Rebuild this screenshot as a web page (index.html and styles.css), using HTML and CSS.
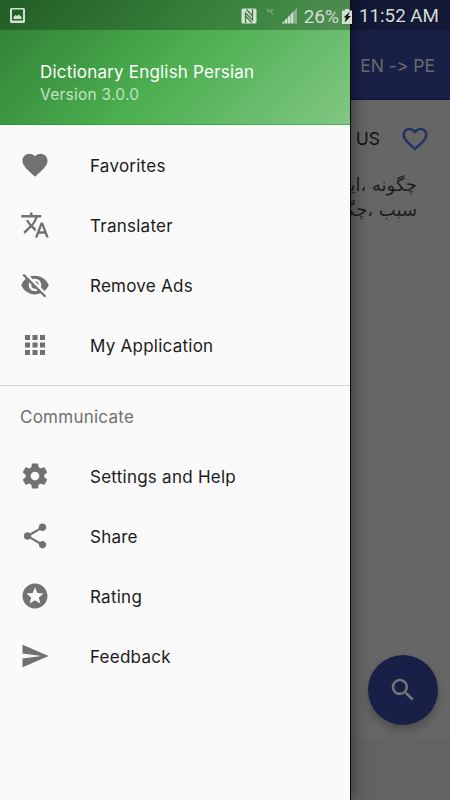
FILE: index.html
```html
<!DOCTYPE html>
<html lang="en">
<head>
  <meta charset="utf-8">
  <title>Dictionary English Persian</title>
  <link rel="stylesheet" href="styles.css">
</head>
<body>
<div class="screen">
  <div class="page">
    <div class="toolbar">EN -&gt; PE</div>
    <div class="word">
      <span class="word-accent">US</span>
      <svg class="icon word-heart" viewBox="0 0 24 24"><path d="M16.5 3c-1.74 0-3.41.81-4.5 2.09C10.91 3.81 9.24 3 7.5 3 4.42 3 2 5.42 2 8.5c0 3.78 3.4 6.86 8.55 11.54L12 21.35l1.45-1.32C18.6 15.36 22 12.28 22 8.5 22 5.42 19.58 3 16.5 3zm-4.4 15.55l-.1.1-.1-.1C7.14 14.24 4 11.39 4 8.5 4 6.5 5.5 5 7.5 5c1.54 0 3.04.99 3.57 2.36h1.87C13.46 5.99 14.96 5 16.5 5c2 0 3.5 1.5 3.5 3.5 0 2.89-3.14 5.74-7.9 10.05z"/></svg>
    </div>
    <div class="meaning" lang="fa" dir="rtl">
      <p>چگونه ،ایا</p>
      <p>سبب ،چگو</p>
    </div>
    <div class="ad-bar"></div>
  </div>
  <div class="fab">
    <svg class="icon fab-icon" viewBox="0 0 24 24"><path d="M15.5 14h-.79l-.28-.27C15.41 12.59 16 11.11 16 9.5 16 5.91 13.09 3 9.5 3S3 5.91 3 9.5 5.91 16 9.5 16c1.61 0 3.09-.59 4.23-1.57l.27.28v.79l5 4.99L20.49 19l-4.99-5zm-6 0C7.01 14 5 11.99 5 9.5S7.01 5 9.5 5 14 7.01 14 9.5 11.99 14 9.5 14z"/></svg>
  </div>

  <div class="drawer">
    <div class="drawer-header">
      <div class="app-name">Dictionary English Persian</div>
      <div class="app-version">Version 3.0.0</div>
    </div>
    <div class="menu">
      <div class="menu-item">
        <svg class="icon" viewBox="0 0 24 24"><path d="M12 21.35l-1.45-1.32C5.4 15.36 2 12.28 2 8.5 2 5.42 4.42 3 7.5 3c1.74 0 3.41.81 4.5 2.09C13.09 3.81 14.76 3 16.5 3 19.58 3 22 5.42 22 8.5c0 3.78-3.4 6.86-8.55 11.54L12 21.35z"/></svg>
        <span class="menu-label">Favorites</span>
      </div>
      <div class="menu-item">
        <svg class="icon" viewBox="0 0 24 24"><path d="M12.87 15.07l-2.54-2.51.03-.03c1.74-1.94 2.98-4.17 3.71-6.53H17V4h-7V2H8v2H1v1.99h11.17C11.5 7.92 10.44 9.75 9 11.35 8.07 10.32 7.3 9.19 6.69 8h-2c.73 1.63 1.73 3.17 2.98 4.56l-5.09 5.02L4 19l5-5 3.11 3.11.76-2.04zM18.5 10h-2L12 22h2l1.12-3h4.75L21 22h2l-4.5-12zm-2.62 7l1.62-4.33L19.12 17h-3.24z"/></svg>
        <span class="menu-label">Translater</span>
      </div>
      <div class="menu-item">
        <svg class="icon" viewBox="0 0 24 24"><path d="M12 7c2.76 0 5 2.24 5 5 0 .65-.13 1.26-.36 1.83l2.92 2.92c1.51-1.26 2.7-2.89 3.43-4.75-1.73-4.39-6-7.5-11-7.5-1.4 0-2.74.25-3.98.7l2.16 2.16C10.74 7.13 11.35 7 12 7zM2 4.27l2.28 2.28.46.46C3.08 8.3 1.78 10.02 1 12c1.73 4.39 6 7.5 11 7.5 1.55 0 3.03-.3 4.38-.84l.42.42L19.73 22 21 20.73 3.27 3 2 4.27zM7.53 9.8l1.55 1.55c-.05.21-.08.43-.08.65 0 1.66 1.34 3 3 3 .22 0 .44-.03.65-.08l1.55 1.55c-.67.33-1.41.53-2.2.53-2.76 0-5-2.24-5-5 0-.79.2-1.53.53-2.2zm4.31-.78l3.15 3.15.02-.16c0-1.66-1.34-3-3-3l-.17.01z"/></svg>
        <span class="menu-label">Remove Ads</span>
      </div>
      <div class="menu-item">
        <svg class="icon" viewBox="0 0 24 24"><path d="M4 8h4V4H4v4zm6 12h4v-4h-4v4zm-6 0h4v-4H4v4zm0-6h4v-4H4v4zm6 0h4v-4h-4v4zm6-10v4h4V4h-4zm-6 4h4V4h-4v4zm6 6h4v-4h-4v4zm0 6h4v-4h-4v4z"/></svg>
        <span class="menu-label">My Application</span>
      </div>
    </div>
    <div class="menu menu-communicate">
      <div class="menu-title">Communicate</div>
      <div class="menu-item">
        <svg class="icon" viewBox="0 0 24 24"><path d="M19.43 12.98c.04-.32.07-.64.07-.98s-.03-.66-.07-.98l2.11-1.65c.19-.15.24-.42.12-.64l-2-3.46c-.12-.22-.39-.3-.61-.22l-2.49 1c-.52-.4-1.08-.73-1.69-.98l-.38-2.65C14.46 2.18 14.25 2 14 2h-4c-.25 0-.46.18-.49.42l-.38 2.65c-.61.25-1.17.59-1.69.98l-2.49-1c-.23-.09-.49 0-.61.22l-2 3.46c-.13.22-.07.49.12.64l2.11 1.65c-.04.32-.07.65-.07.98s.03.66.07.98l-2.11 1.65c-.19.15-.24.42-.12.64l2 3.46c.12.22.39.3.61.22l2.49-1c.52.4 1.08.73 1.69.98l.38 2.65c.03.24.24.42.49.42h4c.25 0 .46-.18.49-.42l.38-2.65c.61-.25 1.17-.59 1.69-.98l2.49 1c.23.09.49 0 .61-.22l2-3.46c.12-.22.07-.49-.12-.64l-2.11-1.65zM12 15.5c-1.93 0-3.5-1.57-3.5-3.5s1.57-3.5 3.5-3.5 3.5 1.57 3.5 3.5-1.57 3.5-3.5 3.5z"/></svg>
        <span class="menu-label">Settings and Help</span>
      </div>
      <div class="menu-item">
        <svg class="icon" viewBox="0 0 24 24"><path d="M18 16.08c-.76 0-1.44.3-1.96.77L8.91 12.7c.05-.23.09-.46.09-.7s-.04-.47-.09-.7l7.05-4.11c.54.5 1.25.81 2.04.81 1.66 0 3-1.34 3-3s-1.34-3-3-3-3 1.34-3 3c0 .24.04.47.09.7L8.04 9.81C7.5 9.31 6.79 9 6 9c-1.66 0-3 1.34-3 3s1.34 3 3 3c.79 0 1.5-.31 2.04-.81l7.12 4.16c-.05.21-.08.43-.08.65 0 1.61 1.31 2.92 2.92 2.92 1.61 0 2.92-1.31 2.92-2.92s-1.31-2.92-2.92-2.92z"/></svg>
        <span class="menu-label">Share</span>
      </div>
      <div class="menu-item">
        <svg class="icon" viewBox="0 0 24 24"><path d="M11.99 2C6.47 2 2 6.48 2 12s4.47 10 9.99 10C17.52 22 22 17.52 22 12S17.52 2 11.99 2zm4.24 16L12 15.45 7.77 18l1.12-4.81-3.73-3.23 4.92-.42L12 5l1.92 4.53 4.92.42-3.73 3.23L16.23 18z"/></svg>
        <span class="menu-label">Rating</span>
      </div>
      <div class="menu-item">
        <svg class="icon" viewBox="0 0 24 24"><path d="M2.01 21L23 12 2.01 3 2 10l15 2-15 2z"/></svg>
        <span class="menu-label">Feedback</span>
      </div>
    </div>
  </div>

  <div class="statusbar">
    <svg class="status-picture" viewBox="0 0 15 16"><path fill-rule="evenodd" d="M1.5 0h12A1.5 1.5 0 0 1 15 1.5v12a1.5 1.5 0 0 1-1.5 1.5h-12A1.5 1.5 0 0 1 0 13.5v-12A1.5 1.5 0 0 1 1.500 0zM2 1.500v11h11v-11zM3.500 11V9l2-2L7 8l1.500-1.500 3 2.500v2z"/></svg>
    <div class="status-right">
      <svg class="status-nfc" viewBox="0 0 16 16"><rect x=".5" y=".5" width="15" height="15" rx="1.500"/><path class="wave" d="M4.500 15V5l7 7V1M5.500 1.500l6 6.500M4.500 8l6 6.500"/></svg>
      <svg class="status-mute" viewBox="0 0 9 8"><path d="M.5 .5l7 6.500M2 2v2.500M5 1v2.500l2-2"/></svg>
      <svg class="status-signal" viewBox="0 0 16 16"><path d="M0 15.500v-.5l2.500-2.500v3zM3 15.500V12l2.500-2.500v6zM6 15.500V9l2.500-2.500v9zM9 15.500V6l2.500-2.500v12z"/><path class="weak" d="M12 15.500V3L15 0v15.500z"/></svg>
      <span class="status-percent">26%</span>
      <svg class="status-battery" viewBox="0 0 10 15"><path d="M3 0h4v1.500h3V15H0V1.500h3z"/><path class="bolt" d="M8 2.500L1.500 8.500H4L2.500 13.500 9 7H6l2-4.500z"/></svg>
      <span class="status-time">11:52 AM</span>
    </div>
  </div>
</div>
</body>
</html>
```
FILE: styles.css
```css
body {
  margin: 0;
  font-family: Inter, "Liberation Sans", sans-serif;
}

p {
  margin: 0;
}

.screen {
  position: relative;
  width: 450px;
  height: 800px;
  overflow: hidden;
  background: #666;
}

.icon {
  display: block;
  flex: none;
  width: 30px;
  height: 30px;
  fill: #717171;
}

/* page behind the drawer */
.page {
  display: flex;
  flex-direction: column;
  height: 800px;
}

.toolbar {
  box-sizing: border-box;
  height: 100px;
  padding: 30px 15px 0 0;
  border-bottom: 1px solid #101548;
  background: #192048;
  color: #6b6b6b;
  font-size: 17.5px;
  font-feature-settings: "calt" 0;
  line-height: 72px;
  text-align: right;
}

.word {
  display: flex;
  justify-content: flex-end;
  align-items: center;
  height: 30px;
  margin-top: 24px;
  padding-right: 20px;
}

.word-accent {
  margin-right: 20px;
  color: #111;
  font-size: 17.5px;
  line-height: 32px;
}

.word-heart {
  fill: #252f68;
}

.meaning {
  flex: 1;
  padding: 18px 33px 0 0;
  color: #1c1c1c;
  font-family: "DejaVu Sans", sans-serif;
  font-size: 18px;
  line-height: 25px;
  white-space: nowrap;
}

.ad-bar {
  height: 62px;
  background: #636363;
}

.fab {
  position: absolute;
  left: 367.5px;
  top: 655px;
  display: flex;
  align-items: center;
  justify-content: center;
  width: 70px;
  height: 70px;
  border-radius: 50%;
  background: #192048;
  box-shadow: 0 5px 9px rgba(0,0,0,0.25);
}

.fab-icon {
  fill: #757575;
}

/* drawer */
.drawer {
  position: absolute;
  left: 0;
  top: 0;
  width: 350px;
  height: 800px;
  background: #fafafa;
  box-shadow: 1px 0 0 #080808, 2px 0 16px rgba(0,0,0,0.5);
}

.drawer-header {
  box-sizing: border-box;
  height: 125px;
  padding: 60px 40px 0;
  border-bottom: 1px solid rgba(0,150,0,0.4);
  background: linear-gradient(135deg, #2e7d32, #4caf50 50%, #81c784) border-box;
}

.app-name {
  color: #fff;
  font-size: 17px;
  letter-spacing: 0.2px;
  line-height: 24px;
}

.app-version {
  color: #c2e3c3;
  font-size: 15.5px;
  letter-spacing: 0.25px;
  line-height: 22px;
}

.menu {
  padding-top: 10px;
}

.menu-communicate {
  margin-top: 10px;
  padding-top: 0;
  border-top: 1px solid #d2d2d2;
}

.menu-item {
  display: flex;
  align-items: center;
  gap: 40px;
  height: 60px;
  padding-left: 20px;
}

.menu-label {
  padding-top: 2px;
  color: #1b1b1b;
  font-size: 17px;
  letter-spacing: 0.25px;
}

.menu-title {
  height: 60px;
  padding-left: 20px;
  color: #6f6f6f;
  font-size: 17px;
  letter-spacing: 0.25px;
  line-height: 62px;
}

/* system status bar */
.statusbar {
  position: absolute;
  left: 0;
  top: 0;
  box-sizing: border-box;
  display: flex;
  justify-content: space-between;
  align-items: center;
  width: 450px;
  height: 30px;
  padding: 2px 11px 0 10px;
  background: rgba(0,0,0,0.25);
  color: #d3dfd3;
  font-family: Roboto, sans-serif;
  font-size: 19px;
}

.statusbar svg {
  display: block;
  fill: #d3e0d3;
}

.status-right {
  display: flex;
  align-items: center;
}

.status-picture {
  width: 15px;
  height: 16px;
}

.status-nfc {
  width: 16px;
  height: 16px;
  margin-right: 9px;
}

.statusbar .wave {
  fill: none;
  stroke: #3d793f;
  stroke-width: 1.2;
}

.statusbar .status-mute {
  width: 9px;
  height: 8px;
  margin: 0 7px 8px 0;
  fill: none;
  stroke: #8fb08f;
}

.status-signal {
  width: 16px;
  height: 16px;
  margin-right: 6px;
}

.statusbar .weak {
  fill: #8fb08f;
}

.status-percent {
  margin-right: 3px;
}

.status-battery {
  width: 10px;
  height: 15px;
  margin-right: 7px;
}

.status-time {
  font-size: 18.8px;
}

.statusbar .bolt {
  fill: #101510;
}
```
